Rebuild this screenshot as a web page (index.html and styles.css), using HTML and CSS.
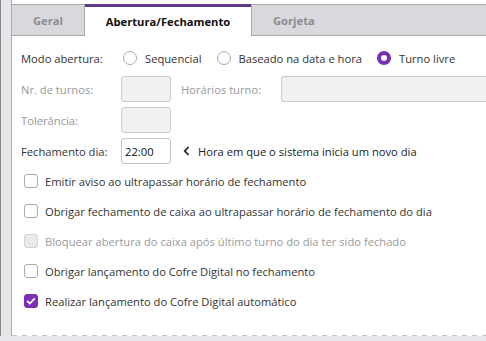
FILE: index.html
```html
<!DOCTYPE html>
<html lang="pt-BR">
<head>
<meta charset="utf-8">
<link rel="stylesheet" href="styles.css">
</head>
<body>
<div class="app">
  <div class="strip"></div>
  <div class="main">
    <div class="tabs">
      <div class="tab tab-geral">Geral</div>
      <div class="tab tab-active">Abertura/Fechamento</div>
      <div class="tab tab-rest">Gorjeta</div>
    </div>
    <div class="content">
      <div class="row">
        <div class="label">Modo abertura:</div>
        <div class="radios">
          <span class="opt"><span class="radio"></span>Sequencial</span>
          <span class="opt"><span class="radio"></span>Baseado na data e hora</span>
          <span class="opt"><span class="radio on"></span>Turno livre</span>
        </div>
      </div>
      <div class="row">
        <div class="label dis">Nr. de turnos:</div>
        <div class="input small disabled"></div>
        <div class="label2 dis">Horários turno:</div>
        <div class="input wide disabled"></div>
      </div>
      <div class="row">
        <div class="label dis">Tolerância:</div>
        <div class="input small disabled"></div>
      </div>
      <div class="row">
        <div class="label">Fechamento dia:</div>
        <div class="input small">22:00</div>
        <div class="hint"><svg class="chev" width="7" height="10" viewBox="0 0 7 10"><path d="M5.5 1 L1.8 5 L5.5 9" fill="none" stroke="#222" stroke-width="1.8"/></svg>Hora em que o sistema inicia um novo dia</div>
      </div>
      <div class="checks">
        <div class="check"><span class="box"></span>Emitir aviso ao ultrapassar horário de fechamento</div>
        <div class="check"><span class="box"></span>Obrigar fechamento de caixa ao ultrapassar horário de fechamento do dia</div>
        <div class="check dis"><span class="box boxdis"></span>Bloquear abertura do caixa após último turno do dia ter sido fechado</div>
        <div class="check"><span class="box"></span>Obrigar lançamento do Cofre Digital no fechamento</div>
        <div class="check"><span class="box on"><svg width="10" height="8" viewBox="0 0 10 8"><path d="M1.2 4 L3.8 6.5 L8.8 1.3" fill="none" stroke="#fff" stroke-width="1.8"/></svg></span>Realizar lançamento do Cofre Digital automático</div>
      </div>
    </div>
  </div>
</div>
</body>
</html>
```
FILE: styles.css
```css
html, body {
  margin: 0;
  padding: 0;
}
body {
  width: 486px;
  height: 341px;
  overflow: hidden;
  background: #e7e7eb;
  font-family: "Open Sans", "Noto Sans", sans-serif;
  font-size: 11.2px;
  color: #333;
}
.app {
  display: flex;
  height: 336px;
}
.strip {
  width: 10px;
  border-left: 1px solid #8f8384;
  background: #e5e5ea;
}
.main {
  flex: 1;
  border-left: 1px solid #a9a9ad;
  padding-top: 4px;
  display: flex;
  flex-direction: column;
  background-image: repeating-linear-gradient(90deg, #c4c4c8 0 5px, transparent 5px 10px);
  background-size: 100% 1px;
  background-position: 0 100%;
  background-repeat: no-repeat;
  background-color: #fff;
  box-sizing: border-box;
  padding-bottom: 2px;
}
.tabs {
  display: flex;
  height: 32px;
}
.tab {
  box-sizing: border-box;
  height: 32px;
  font-weight: bold;
  font-size: 11.2px;
  display: flex;
  align-items: center;
  padding: 0 21px;
}
.tab-geral {
  width: 73px;
  background: #d9d9dd;
  border-top: 1px solid #a9a9ad;
  border-bottom: 1px solid #a9a9ad;
  border-right: 1px solid #a9a9ad;
  color: #8c8c90;
  justify-content: center;
  padding: 0;
}
.tab-active {
  width: 166px;
  border-top: 3px solid #623a8a;
  color: #111;
  justify-content: center;
  padding: 0;
}
.tab-rest {
  flex: 1;
  background: #d9d9dd;
  border-top: 1px solid #a9a9ad;
  border-bottom: 1px solid #a9a9ad;
  border-left: 1px solid #a9a9ad;
  color: #8c8c90;
}
.content {
  padding: 9px 0 0 9px;
  display: flex;
  flex-direction: column;
  gap: 5px;
}
.row {
  display: flex;
  align-items: center;
  height: 26px;
}
.label {
  width: 100px;
}
.dis {
  color: #979799;
}
.radios {
  display: flex;
  align-items: center;
  margin-left: 2px;
  gap: 15px;
}
.opt {
  display: flex;
  align-items: center;
  gap: 8px;
}
.radio {
  box-sizing: border-box;
  width: 14px;
  height: 14px;
  border-radius: 50%;
  border: 1px solid #ababae;
  background: #fff;
}
.radio.on {
  border: 4px solid #7c2fb6;
}
.input {
  box-sizing: border-box;
  height: 26px;
  border: 1px solid #c4c4c8;
  border-radius: 3px;
  background: #fff;
  padding-left: 3px;
  display: flex;
  align-items: center;
  color: #111;
}
.input.small {
  width: 50px;
}
.input.disabled {
  background: #f1f1f4;
  border-color: #cbcbcf;
}
.label2 {
  margin-left: 10px;
  width: 100px;
}
.input.wide {
  flex: 1;
  border-right: none;
  border-radius: 3px 0 0 3px;
}
.hint {
  margin-left: 12px;
  display: flex;
  align-items: center;
  color: #222;
}
.chev {
  margin-right: 8px;
}
.checks {
  margin-top: -3px;
  display: flex;
  flex-direction: column;
  padding-left: 3px;
}
.check {
  height: 30px;
  display: flex;
  align-items: center;
  gap: 7px;
  color: #333;
}
.check.dis {
  color: #9a9a9c;
}
.box {
  box-sizing: border-box;
  width: 14px;
  height: 14px;
  border: 1px solid #ababae;
  border-radius: 3px;
  background: #fff;
  display: flex;
  align-items: center;
  justify-content: center;
}
.box.boxdis {
  background: #e9e9ec;
  border-color: #d0d0d3;
}
.box.on {
  background: #7c2fb6;
  border-color: #7c2fb6;
}
```
